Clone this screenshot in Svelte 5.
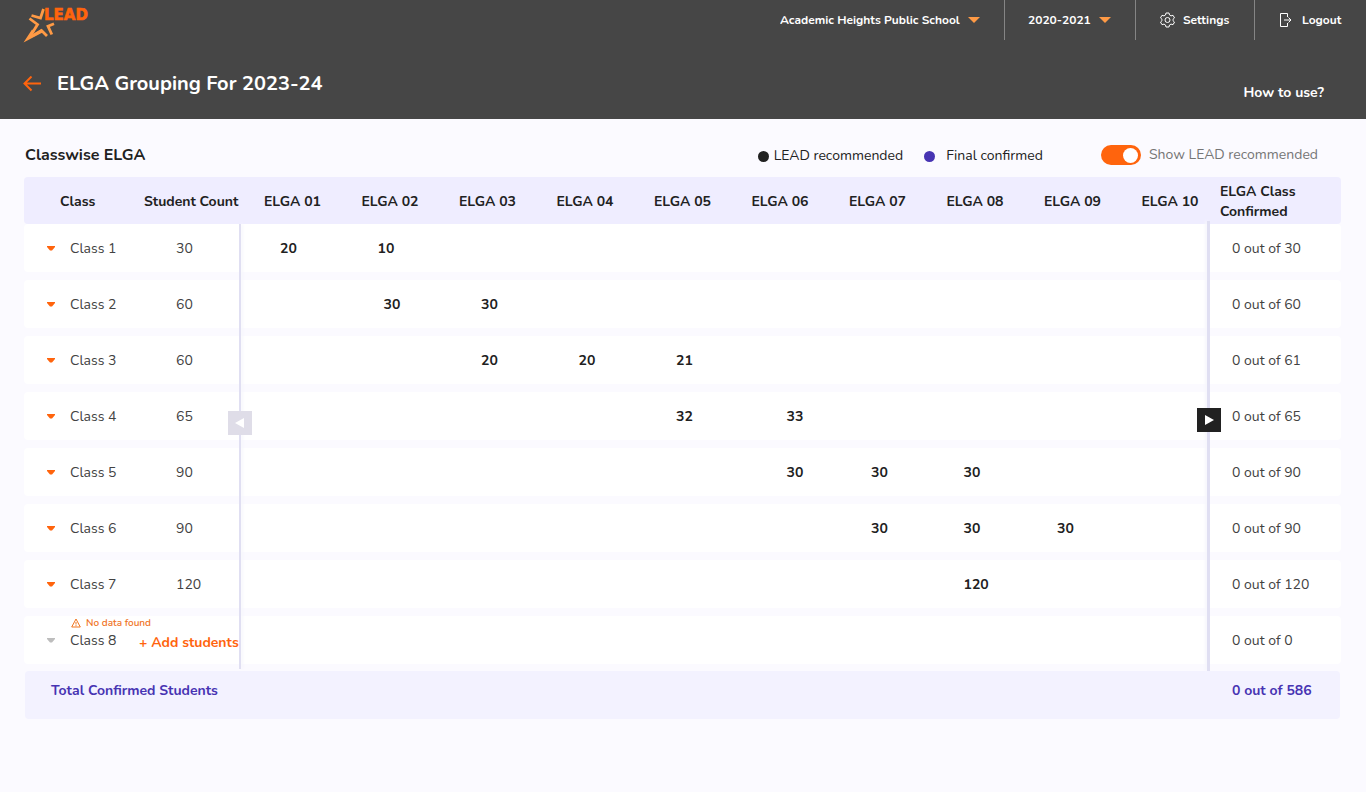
<script>
  const levels = ["01", "02", "03", "04", "05", "06", "07", "08", "09", "10"];

  const classes = [
    { name: "Class 1", count: 30, total: 30, groups: { "01": 20, "02": 10 } },
    { name: "Class 2", count: 60, total: 60, groups: { "02": 30, "03": 30 } },
    { name: "Class 3", count: 60, total: 61, groups: { "03": 20, "04": 20, "05": 21 } },
    { name: "Class 4", count: 65, total: 65, groups: { "05": 32, "06": 33 } },
    { name: "Class 5", count: 90, total: 90, groups: { "06": 30, "07": 30, "08": 30 } },
    { name: "Class 6", count: 90, total: 90, groups: { "07": 30, "08": 30, "09": 30 } },
    { name: "Class 7", count: 120, total: 120, groups: { "08": 120 } },
    { name: "Class 8", count: 0, total: 0, groups: {} }
  ];

  let showLead = $state(true);
</script>

<header>
  <div class="topbar">
    <a class="logo" href="/" aria-label="LEAD">
      <svg width="70" height="38" viewBox="0 0 70 38">
        <g fill="none" stroke="#ff9a45" stroke-width="2.8">
          <path d="M8.500 10.500L17.500 13L20.500 4" />
          <path d="M6.500 13.500L14.500 19.500L10.500 26" />
          <path d="M31 18.800L25 21.200L28.800 29.500" />
          <path d="M9 31L18.500 25.500L24 31" />
        </g>
        <path d="M0.500 37.500L9 24.500L12 26.500L9.500 30L18.500 24L19.500 27.500z" fill="#ff9a45" />
        <text x="21" y="15">LEAD</text>
      </svg>
    </a>
    <nav>
      <div class="item school">
        <select aria-label="School"><option>Academic Heights Public School</option></select>
        <svg width="12" height="6" viewBox="0 0 12 6"><path d="M0 0h12L6 6z" fill="#ff9a45" /></svg>
      </div>
      <div class="item year">
        <select aria-label="Academic year"><option>2020-2021</option></select>
        <svg width="12" height="6" viewBox="0 0 12 6"><path d="M0 0h12L6 6z" fill="#ff9a45" /></svg>
      </div>
      <a class="item settings" href="/settings">
        <svg width="15" height="16" viewBox="0 0 15 16" fill="none" stroke="#fff">
          <path d="M6 1h3l.5 2 1.500.9 2-.6 1.500 2.600L13 7.300v1.400l1.500 1.400-1.500 2.600-2-.6-1.500.9L9 15H6l-.5-2-1.500-.9-2 .6L.5 10.100 2 8.700V7.300L.5 5.900 2 3.300l2 .6L5.500 3z" />
          <circle cx="7.500" cy="8" r="2.500" />
        </svg>
        Settings
      </a>
      <a class="item logout" href="/logout">
        <svg width="13" height="16" viewBox="0 0 13 16" fill="none" stroke="#fff">
          <path d="M8.500 5V1.500h-7v13h7V11M5 8h7M9.500 5.500L12 8l-2.500 2.500" />
        </svg>
        Logout
      </a>
    </nav>
  </div>
  <div class="titlebar">
    <a class="back" href="/" aria-label="Back">
      <svg width="18" height="16" viewBox="0 0 18 16" fill="none" stroke="#ff640d" stroke-width="2">
        <path d="M18 7.500H1.500M8.500 0.500L1.500 7.500l7 7" />
      </svg>
    </a>
    <h1>ELGA Grouping For 2023-24</h1>
    <a class="help" href="/help">How to use?</a>
  </div>
</header>

<main>
  <div class="toolbar">
    <h2>Classwise ELGA</h2>
    <span class="legend lead">LEAD recommended</span>
    <span class="legend final">Final confirmed</span>
    <label class="toggle">
      <input type="checkbox" role="switch" bind:checked={showLead} />
      Show LEAD recommended
    </label>
  </div>

  <div class="board">
    <table>
      <thead>
        <tr>
          <th class="class">Class</th>
          <th class="count">Student Count</th>
          {#each levels as level}
            <th class="level">ELGA {level}</th>
          {/each}
          <th class="confirmed">ELGA Class Confirmed</th>
        </tr>
      </thead>
      <tbody>
        {#each classes as row}
          <tr>
            <td class="class">
              <button class="expand" disabled={!row.count} aria-label="Expand {row.name}">
                <svg width="8" height="5" viewBox="0 0 8 5"><path d="M0 0h8v1L5 4.500H3L0 1z" fill="currentColor" /></svg>
              </button>
              {row.name}
              {#if !row.count}
                <span class="warning">
                  <svg width="10" height="10" viewBox="0 0 10 10" fill="none" stroke="currentColor">
                    <path d="M5 1L9.300 9H.7zM5 4v2.500M5 7.200v1" />
                  </svg>
                  No data found
                </span>
              {/if}
            </td>
            <td class="count">
              {#if row.count}
                {row.count}
              {:else}
                <button class="add">+ Add students</button>
              {/if}
            </td>
            {#each levels as level}
              <td class="level">{showLead ? (row.groups[level] ?? "") : ""}</td>
            {/each}
            <td class="confirmed">0 out of {row.total}</td>
          </tr>
        {/each}
      </tbody>
      <tfoot>
        <tr>
          <th class="total">Total Confirmed Students</th>
          <td class="confirmed">0 out of 586</td>
        </tr>
      </tfoot>
    </table>
    <div class="divider left">
      <button class="scroll" disabled aria-label="Previous levels">
        <svg width="10" height="12" viewBox="0 0 10 12"><path d="M9 1v10L0 6z" fill="#fff" /></svg>
      </button>
    </div>
    <div class="divider right">
      <button class="scroll" aria-label="Next levels">
        <svg width="10" height="12" viewBox="0 0 10 12"><path d="M1 1v10l9-5z" fill="#fff" /></svg>
      </button>
    </div>
  </div>
</main>

<style>
  :global(body) {
    background: #fbfaff;
    color: #212121;
    font-family: Nunito, Lato, sans-serif;
    font-size: 14px;
    line-height: 20px;
  }

  a {
    color: inherit;
    text-decoration: none;
  }

  svg {
    flex: none;
  }

  button,
  select {
    padding: 0;
    border: 0;
    background: none;
    color: inherit;
    font: inherit;
  }

  h1,
  h2 {
    margin: 0;
  }

  header {
    height: 119px;
    background: #464646;
    color: #fff;
    font-weight: 700;
  }

  .topbar {
    display: flex;
    justify-content: space-between;
    height: 48px;
    padding-left: 23px;
  }

  .logo {
    padding-top: 5px;
  }

  .logo text {
    fill: #ff640d;
    stroke: #ff640d;
    stroke-width: 0.6px;
    font: bold 15px "DejaVu Sans", sans-serif;
  }

  nav {
    display: flex;
    font-size: 12px;
  }

  .item {
    display: flex;
    align-items: center;
    box-sizing: border-box;
    height: 40px;
    padding: 0 24px;
  }

  .item + .item {
    border-left: 1px solid #858585;
  }

  .item select {
    flex: 1;
    appearance: none;
  }

  .school {
    width: 248px;
  }

  .year {
    width: 131px;
    padding-left: 23px;
  }

  .settings {
    width: 119px;
    gap: 8px;
  }

  .logout {
    width: 112px;
    gap: 10px;
  }

  .titlebar {
    display: flex;
    align-items: center;
    height: 71px;
    padding: 0 42px 0 23px;
  }

  .back {
    display: flex;
    margin-right: 16px;
  }

  h1 {
    font-size: 20px;
    line-height: 28px;
  }

  .help {
    margin: 18px 0 0 auto;
  }

  main {
    padding: 24px 25px 24px 24px;
  }

  .toolbar {
    display: flex;
    align-items: center;
    height: 24px;
    margin-bottom: 10px;
    padding: 0 23px 0 1px;
  }

  h2 {
    margin-right: auto;
    font-size: 16px;
  }

  .legend {
    display: flex;
    align-items: center;
    padding-top: 2px;
  }

  .legend::before {
    content: "";
    width: 11px;
    height: 11px;
    margin-right: 5px;
    border-radius: 50%;
    background: #212121;
  }

  .final {
    margin: 0 58px 0 21px;
  }

  .final::before {
    margin-right: 11px;
    background: #4734b3;
  }

  .toggle {
    display: flex;
    align-items: center;
    gap: 8px;
    color: #757575;
  }

  .toggle input {
    display: flex;
    align-items: center;
    width: 40px;
    height: 20px;
    margin: 0;
    border-radius: 10px;
    background: #9e9e9e;
    appearance: none;
  }

  .toggle input::before {
    content: "";
    width: 15px;
    height: 15px;
    margin-left: 3px;
    border-radius: 50%;
    background: #fff;
  }

  .toggle input:checked {
    background: #ff640d;
  }

  .toggle input:checked::before {
    margin-left: 22px;
  }

  .board {
    position: relative;
  }

  table,
  thead,
  tfoot {
    display: block;
  }

  tbody {
    display: grid;
    gap: 8px;
  }

  tr {
    display: grid;
    grid-template-columns: 112px 104px repeat(10, 1fr) 126px;
    align-items: center;
    min-height: 48px;
    border-radius: 4px;
    background: #fff;
  }

  th,
  td {
    padding: 2px 0 0;
    text-align: left;
    white-space: nowrap;
  }

  thead tr {
    min-height: 47px;
    background: #efedff;
  }

  thead .class {
    padding-left: 36px;
  }

  thead .count {
    padding-left: 8px;
  }

  thead .level {
    padding-left: 24px;
  }

  thead .confirmed {
    padding-left: 5px;
    white-space: normal;
  }

  tbody {
    color: #424242;
  }

  tbody .class {
    position: relative;
    display: flex;
    align-items: center;
  }

  .expand {
    display: flex;
    justify-content: center;
    width: 16px;
    margin: 0 11px 2px 19px;
    color: #ff640d;
  }

  .expand:disabled {
    color: #bdbdbd;
  }

  tbody .count {
    padding-left: 40px;
  }

  tbody .count:has(.add) {
    padding: 6px 0 0 3px;
  }

  .add {
    color: #ff640d;
    font-weight: 700;
  }

  .warning {
    position: absolute;
    bottom: 20px;
    left: 47px;
    display: flex;
    align-items: center;
    gap: 5px;
    color: #f0741f;
    font-size: 10px;
    font-weight: 600;
    line-height: 16px;
  }

  tbody .level {
    padding-left: 46px;
    color: #212121;
    font-weight: 700;
  }

  tbody tr:first-child .level {
    padding-left: 40px;
  }

  /* the cells of levels 06, 08 and 09 */
  tbody .level:nth-child(8) {
    padding-left: 59px;
  }

  tbody .level:nth-child(10) {
    padding-left: 41px;
  }

  tbody .level:nth-child(11) {
    padding-left: 37px;
  }

  .confirmed {
    padding-left: 17px;
  }

  tfoot tr {
    grid-template-columns: 1fr 125px;
    align-items: start;
    box-sizing: border-box;
    margin: 7px 1px 0;
    padding-top: 8px;
    background: #f3f2ff;
    color: #4734b3;
    font-weight: 700;
  }

  .total {
    padding-left: 26px;
  }

  .divider {
    position: absolute;
    top: 47px;
    bottom: 50px;
    display: flex;
    justify-content: center;
    width: 2px;
    background: #e0dff2;
  }

  .left {
    left: 215px;
    box-shadow: 2px 0 3px #f6f5fc;
  }

  .right {
    top: 44px;
    right: 131px;
    bottom: 48px;
    width: 3px;
    box-shadow: -2px 0 3px #f6f5fc;
  }

  .scroll {
    display: flex;
    flex: none;
    align-items: center;
    justify-content: center;
    width: 24px;
    height: 24px;
    margin-top: 187px;
    background: #212121;
  }

  .scroll:disabled {
    background: #dfdde8;
  }
</style>
